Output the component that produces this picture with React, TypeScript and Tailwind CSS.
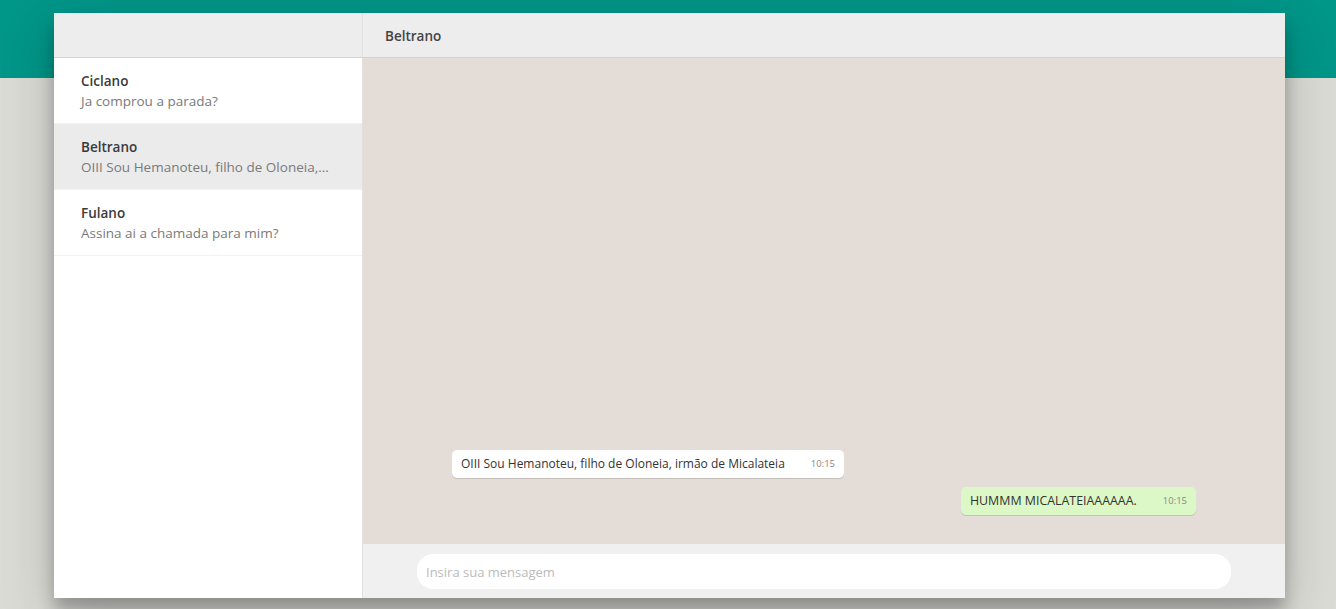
import React from "react";

const chats = [
  { name: "Ciclano", preview: "Ja comprou a parada?", active: false },
  { name: "Beltrano", preview: "OIII Sou Hemanoteu, filho de Oloneia,...", active: true },
  { name: "Fulano", preview: "Assina ai a chamada para mim?", active: false },
];

export default function App() {
  return (
    <div
      className="relative h-[609px] w-full overflow-hidden bg-[#dadbd4]"
      style={{ fontFamily: '"Open Sans", "Noto Sans", sans-serif' }}
    >
      <div className="absolute left-0 top-0 h-[78px] w-full bg-[#009688]" />
      <div className="relative ml-[54px] mt-[13px] flex h-[585px] w-[1231px] shadow-[0_17px_50px_0_rgba(0,0,0,0.19),0_12px_15px_0_rgba(0,0,0,0.24)]">
        {/* Sidebar */}
        <div className="flex w-[308px] flex-col bg-white">
          <div className="h-[45px] border-b border-[#d4d2cf] bg-[#ededed]" />
          <div className="flex flex-col">
            {chats.map((c) => (
              <div
                key={c.name}
                className={`flex h-[66px] flex-col justify-center border-b border-[#f2f2f2] pl-[27px] pt-[2px] ${
                  c.active ? "bg-[#ebebeb]" : "bg-white"
                }`}
              >
                <div className="text-[13.5px] font-semibold leading-[20px] text-[#3a3a3a]">{c.name}</div>
                <div className="whitespace-nowrap text-[13.5px] leading-[21px] text-[#7a7a7a]">{c.preview}</div>
              </div>
            ))}
          </div>
        </div>
        {/* Chat */}
        <div className="flex flex-1 flex-col border-l border-[#e0e0e0] bg-[#e4dcd6]">
          <div className="flex h-[45px] items-center border-b border-[#d4d2cf] bg-[#ededed] pl-[22px] pt-[2px]">
            <span className="text-[13.5px] font-semibold text-[#444]">Beltrano</span>
          </div>
          <div className="flex flex-1 flex-col justify-end gap-[9px] px-[89px] pb-[29px]">
            <div className="flex justify-start">
              <div className="flex h-[28px] items-center rounded-[5px] bg-white pl-[9px] pr-[9px] shadow-[0_1px_0.5px_rgba(0,0,0,0.13)]">
                <span className="text-[12px] text-[#333]">OIII Sou Hemanoteu, filho de Oloneia, irmão de Micalateia</span>
                <span className="ml-[26px] text-[9.5px] text-[#888]">10:15</span>
              </div>
            </div>
            <div className="flex justify-end">
              <div className="flex h-[28px] items-center rounded-[5px] bg-[#dcf8c6] pl-[9px] pr-[9px] shadow-[0_1px_0.5px_rgba(0,0,0,0.13)]">
                <span className="text-[12.4px] text-[#333]">HUMMM MICALATEIAAAAAA.</span>
                <span className="ml-[26px] text-[9.5px] text-[#888]">10:15</span>
              </div>
            </div>
          </div>
          <div className="flex h-[54px] items-start bg-[#f0f0f0] px-[54px] pt-[10px]">
            <input
              className="h-[35px] w-full rounded-[16px] bg-white px-[9px] text-[13px] text-[#333] outline-none placeholder:text-[#bbb]"
              placeholder="Insira sua mensagem"
            />
          </div>
        </div>
      </div>
    </div>
  );
}
